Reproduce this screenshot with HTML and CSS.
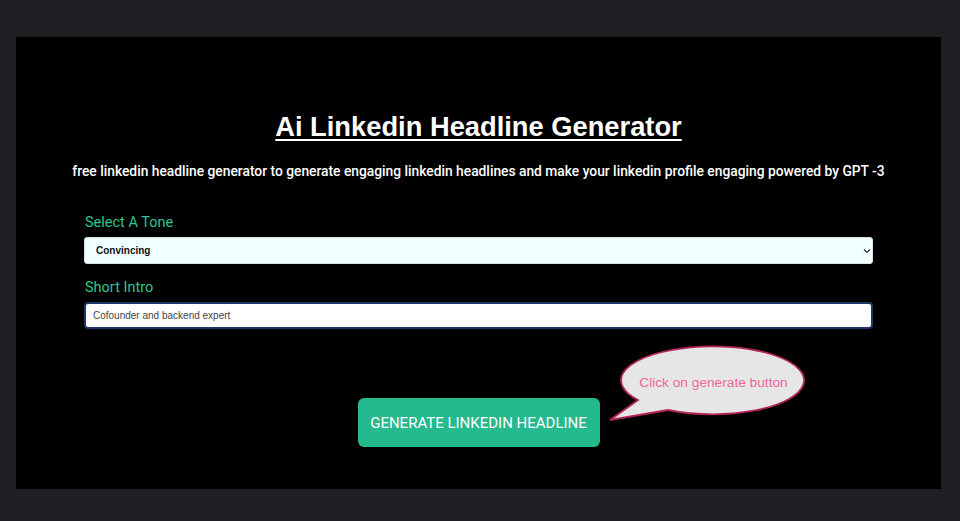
FILE: index.html
```html
<!DOCTYPE html>
<html lang="en">
<head>
<meta charset="utf-8">
<title>Ai Linkedin Headline Generator</title>
<link rel="stylesheet" href="styles.css">
</head>
<body>
<main class="panel">
  <h1 class="title">Ai Linkedin Headline Generator</h1>
  <p class="subtitle">free linkedin headline generator to generate engaging linkedin headlines and make your linkedin profile engaging powered by GPT -3</p>
  <form class="form">
    <label class="label" for="tone">Select A Tone</label>
    <div class="select-wrap">
      <select id="tone" class="select">
        <option>Convincing</option>
      </select>
      <svg class="chevron" width="8" height="6" viewBox="0 0 8 6"><path d="M1 1.5 L4 4.5 L7 1.5" fill="none" stroke="#333" stroke-width="1.2"/></svg>
    </div>
    <label class="label label-second" for="intro">Short Intro</label>
    <input id="intro" class="input" type="text" value="Cofounder and backend expert">
    <div class="action-row">
      <button type="button" class="btn">GENERATE LINKEDIN HEADLINE</button>
      <div class="bubble">
        <svg width="205" height="82" viewBox="0 0 205 82">
          <path d="M63 67 A 91.5 34 0 1 0 33 57 L 5 77 Z" fill="#e6e6e6" stroke="#b3245e" stroke-width="1.8" stroke-linejoin="miter"/>
        </svg>
        <span class="bubble-text">Click on generate button</span>
      </div>
    </div>
  </form>
</main>
</body>
</html>
```
FILE: styles.css
```css
html, body {
  margin: 0;
  padding: 0;
  background: #1f2024;
}
body {
  padding: 37px 19px 32px 16px;
  font-family: "Liberation Sans", Arial, sans-serif;
}
.panel {
  background: #000;
  height: 452px;
  box-sizing: border-box;
  padding: 74px 68px 0 68px;
  color: #fff;
}
.title {
  margin: 0;
  text-align: center;
  font-size: 27.3px;
  line-height: 32px;
  font-weight: 700;
  text-decoration: underline;
  text-underline-offset: 3px;
  text-decoration-thickness: 2px;
}
.subtitle {
  margin: 18px -60px 0 -60px;
  text-align: center;
  font-family: Roboto, "Liberation Sans", sans-serif;
  font-weight: 500;
  font-size: 13.8px;
  line-height: 20px;
}
.form {
  display: flex;
  flex-direction: column;
  margin-top: 33px;
}
.label {
  color: #2fc58c;
  font-family: Roboto, "Liberation Sans", sans-serif;
  font-size: 14.5px;
  line-height: 18px;
  padding-left: 1px;
  margin-bottom: 5px;
}
.label-second {
  margin-top: 15px;
}
.select-wrap {
  position: relative;
}
.select {
  appearance: none;
  -webkit-appearance: none;
  display: block;
  width: 100%;
  height: 27px;
  box-sizing: border-box;
  background: #f0ffff;
  border: 1px solid #d6e2e2;
  border-radius: 3px;
  padding: 0 11px;
  font-family: "Liberation Sans", Arial, sans-serif;
  font-size: 10px;
  font-weight: 700;
  color: #111;
}
.chevron {
  position: absolute;
  right: 2px;
  top: 11px;
}
.input {
  display: block;
  width: 100%;
  height: 27px;
  box-sizing: border-box;
  background: #fff;
  border: 2px solid #1d3766;
  border-radius: 4px;
  padding: 0 7px;
  font-family: "Liberation Sans", Arial, sans-serif;
  font-size: 10px;
  color: #444;
  outline: none;
}
.action-row {
  position: relative;
  display: flex;
  justify-content: center;
  margin-top: 69px;
}
.btn {
  width: 242px;
  height: 49px;
  border: none;
  border-radius: 6px;
  background: #25b98e;
  color: #fff;
  font-family: Roboto, "Liberation Sans", sans-serif;
  font-size: 15px;
  cursor: pointer;
}
.bubble {
  position: absolute;
  top: -55px;
  left: calc(50% + 126px);
  width: 205px;
  height: 82px;
}
.bubble svg {
  display: block;
}
.bubble-text {
  position: absolute;
  left: 29px;
  top: 32px;
  width: 160px;
  text-align: center;
  color: #f0679a;
  font-family: "Liberation Sans", Arial, sans-serif;
  font-size: 13.7px;
  line-height: 16px;
  white-space: nowrap;
}
```
